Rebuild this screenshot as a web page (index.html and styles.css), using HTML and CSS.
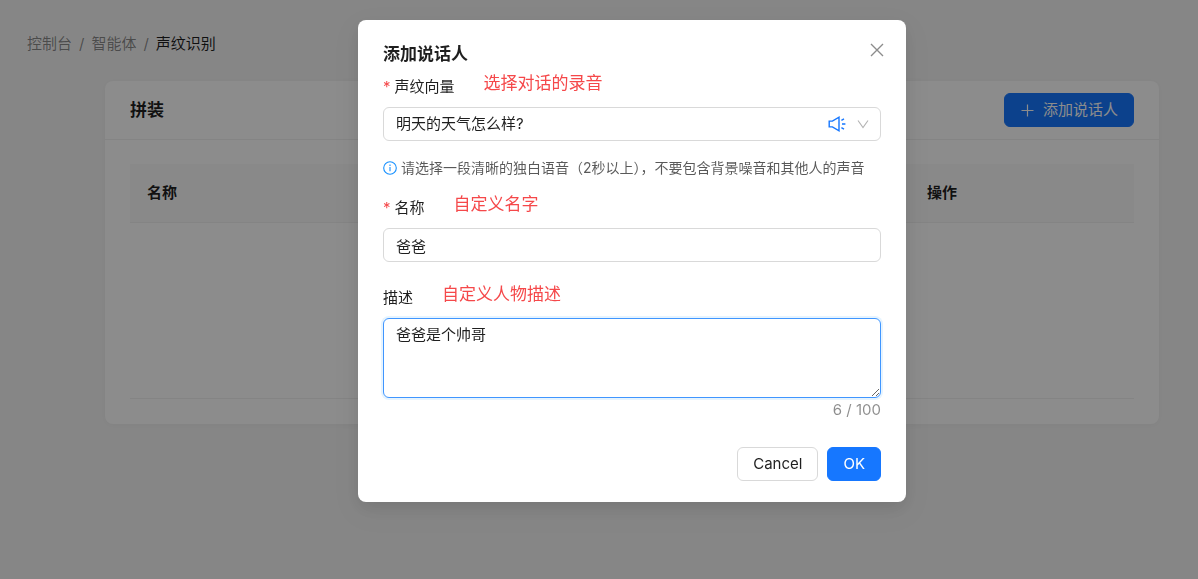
FILE: index.html
```html
<!DOCTYPE html>
<html lang="zh-CN">
<head>
    <meta charset="UTF-8">
    <meta name="viewport" content="width=device-width, initial-scale=1.0">
    <title>声纹识别</title>
    <link rel="stylesheet" href="styles.css">
</head>
<body>
    <div class="page">
        <nav class="breadcrumb">
            <a href="#">控制台</a>
            <span class="separator">/</span>
            <a href="#">智能体</a>
            <span class="separator">/</span>
            <span class="current">声纹识别</span>
        </nav>

        <main class="card">
            <div class="card-head">
                <h1 class="card-title">拼装</h1>
                <button type="button" class="btn btn-primary btn-add">
                    <svg width="15" height="15" viewBox="0 0 15 15" fill="none" stroke="currentColor" stroke-width="1.2">
                        <path d="M7.5 1.5v12M1.5 7.5h12"/>
                    </svg>
                    添加说话人
                </button>
            </div>
            <div class="card-body">
                <table class="table">
                    <thead>
                        <tr>
                            <th>名称</th>
                            <th class="col-action">操作</th>
                        </tr>
                    </thead>
                    <tbody>
                        <tr>
                            <td colspan="2"></td>
                        </tr>
                    </tbody>
                </table>
            </div>
        </main>
    </div>

    <div class="modal-mask">
        <form class="modal" role="dialog" aria-labelledby="modalTitle">
            <div class="modal-head">
                <h2 class="modal-title" id="modalTitle">添加说话人</h2>
                <button type="button" class="modal-close" aria-label="Close">
                    <svg width="14" height="14" viewBox="0 0 14 14" fill="none" stroke="currentColor" stroke-width="1.4">
                        <path d="M1 1l12 12M13 1L1 13"/>
                    </svg>
                </button>
            </div>

            <div class="form-item">
                <div class="label-row">
                    <label class="required" for="voice">声纹向量</label>
                    <span class="note">选择对话的录音</span>
                </div>
                <div class="select-wrap">
                    <select class="control" id="voice">
                        <option>明天的天气怎么样?</option>
                    </select>
                    <div class="suffix">
                        <button type="button" class="play" aria-label="播放">
                            <svg width="18" height="18" viewBox="0 0 18 18" fill="none" stroke="currentColor" stroke-width="1.4">
                                <path d="M1.2 6.1h3.2L11 2.2v13.6l-6.6-3.9H1.2z"/>
                                <path d="M13.4 5.4l2.6-1.5M14 9h3.4M13.4 12.6l2.6 1.5"/>
                            </svg>
                        </button>
                        <svg class="arrow" width="12" height="12" viewBox="0 0 12 12" fill="none" stroke="currentColor" stroke-width="1.1">
                            <path d="M1 2.5l5 7 5-7"/>
                        </svg>
                    </div>
                </div>
                <p class="help">
                    <svg width="14" height="14" viewBox="0 0 14 14" fill="none" stroke="currentColor">
                        <circle cx="7" cy="7" r="6.3" stroke-width="1.1"/>
                        <path d="M7 6v4.2M7 3.6v1.3" stroke-width="1.1"/>
                    </svg>
                    <span>请选择一段清晰的独白语音（2秒以上），不要包含背景噪音和其他人的声音</span>
                </p>
            </div>

            <div class="form-item">
                <div class="label-row">
                    <label class="required" for="name">名称</label>
                    <span class="note">自定义名字</span>
                </div>
                <input class="control" type="text" id="name" value="爸爸">
            </div>

            <div class="form-item form-item-desc">
                <div class="label-row">
                    <label for="desc">描述</label>
                    <span class="note">自定义人物描述</span>
                </div>
                <textarea class="control textarea" id="desc" maxlength="100">爸爸是个帅哥</textarea>
                <div class="count">6 / 100</div>
            </div>

            <div class="modal-foot">
                <button type="button" class="btn">Cancel</button>
                <button type="button" class="btn btn-primary">OK</button>
            </div>
        </form>
    </div>
</body>
</html>
```
FILE: styles.css
```css
:root {
    --primary: #1677ff;
    --danger: #f5484a;
    --text: rgba(0, 0, 0, 0.88);
    --text-secondary: rgba(0, 0, 0, 0.45);
    --border: #d9d9d9;
    --split: #f0f0f0;
}

* {
    box-sizing: border-box;
}

body {
    margin: 0;
    font-family: Inter, "Noto Sans CJK SC", sans-serif;
    font-size: 15px;
    line-height: 24px;
    color: var(--text);
    background: #f5f5f5;
}

button,
input,
select,
textarea {
    font: inherit;
    color: inherit;
}

.page {
    min-height: 100vh;
    padding: 32px 39px 32px 27px;
}

.breadcrumb {
    display: flex;
    gap: 7px;
    color: var(--text-secondary);
}

.breadcrumb a {
    color: inherit;
    text-decoration: none;
}

.breadcrumb .current {
    color: var(--text);
}

.card {
    margin: 25px 0 0 78px;
    background: #fff;
    border-radius: 8px;
    box-shadow: 0 1px 6px rgba(0, 0, 0, 0.04);
}

.card-head {
    display: flex;
    align-items: center;
    justify-content: space-between;
    padding: 12px 25px;
    border-bottom: 1px solid var(--split);
}

.card-title,
.modal-title {
    margin: 0;
    font-size: 17px;
    line-height: 26px;
    font-weight: 600;
}

.card-body {
    padding: 24px 25px 25px;
}

.table {
    width: 100%;
    border-collapse: collapse;
}

.table th {
    padding: 17px;
    text-align: left;
    font-weight: 600;
    background: #fafafa;
    border-bottom: 1px solid var(--split);
}

.table .col-action {
    width: 224px;
}

.table td {
    height: 176px;
    border-bottom: 1px solid var(--split);
}

.btn {
    display: inline-flex;
    align-items: center;
    justify-content: center;
    gap: 8px;
    height: 34px;
    padding: 0 15px;
    border: 1px solid var(--border);
    border-radius: 6px;
    background: #fff;
    cursor: pointer;
}

.btn-primary {
    color: #fff;
    background: var(--primary);
    border-color: var(--primary);
}

.modal-mask {
    position: fixed;
    inset: 0;
    display: flex;
    align-items: flex-start;
    justify-content: center;
    padding: 20px 39px 20px 105px;
    background: rgba(0, 0, 0, 0.45);
    overflow: auto;
}

.modal {
    width: 100%;
    max-width: 548px;
    padding: 21px 25px;
    background: #fff;
    border-radius: 8px;
    box-shadow: 0 6px 16px rgba(0, 0, 0, 0.08), 0 9px 28px 8px rgba(0, 0, 0, 0.05);
}

.modal-head {
    display: flex;
    align-items: flex-start;
    justify-content: space-between;
    margin-bottom: 8px;
}

.modal-close {
    display: flex;
    padding: 2px;
    margin-right: -5px;
    border: none;
    background: none;
    color: var(--text-secondary);
    cursor: pointer;
}

.form-item {
    display: flex;
    flex-direction: column;
}

.form-item + .form-item {
    margin-top: 17px;
}

.form-item + .form-item-desc {
    margin-top: 24px;
}

.label-row {
    display: flex;
    align-items: center;
    gap: 29px;
    height: 24px;
    margin-bottom: 8px;
}

.required::before {
    content: '*';
    margin-right: 4px;
    color: var(--danger);
}

/* hint text rides a little above the label */
.note {
    padding-bottom: 8px;
    font-size: 17px;
    color: var(--danger);
}

.control {
    width: 100%;
    height: 34px;
    padding: 0 12px;
    border: 1px solid var(--border);
    border-radius: 6px;
    background: #fff;
    outline: none;
}

.select-wrap {
    position: relative;
}

.select-wrap .control {
    appearance: none;
}

.suffix {
    position: absolute;
    top: 0;
    right: 12px;
    bottom: 0;
    display: flex;
    align-items: center;
    gap: 11px;
    pointer-events: none;
}

.play {
    display: flex;
    padding: 0;
    border: none;
    background: none;
    color: var(--primary);
    pointer-events: auto;
    cursor: pointer;
}

.arrow {
    color: rgba(0, 0, 0, 0.3);
}

.help {
    display: flex;
    align-items: center;
    gap: 4px;
    margin: 16px 0 0;
    font-size: 14px;
    line-height: 22px;
    color: rgba(0, 0, 0, 0.65);
}

.help svg {
    flex-shrink: 0;
    color: #1690ff;
}

.textarea {
    display: block;
    height: 80px;
    padding: 4px 12px;
    border-color: #4096ff;
    box-shadow: 0 0 0 2px rgba(5, 145, 255, 0.1);
    resize: vertical;
}

.count {
    text-align: right;
    color: var(--text-secondary);
}

.modal-foot {
    display: flex;
    justify-content: flex-end;
    gap: 9px;
    margin-top: 25px;
}
```
